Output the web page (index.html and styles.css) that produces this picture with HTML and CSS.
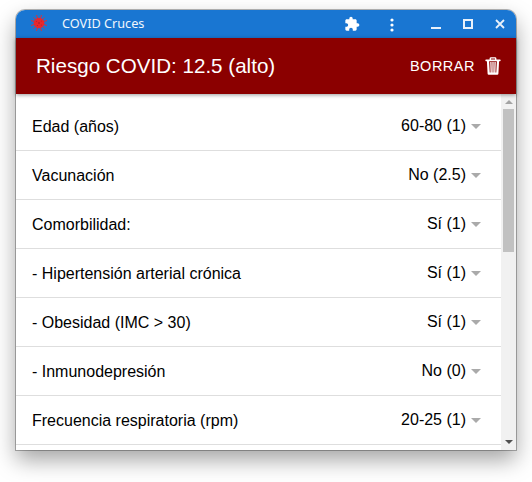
FILE: index.html
```html
<!DOCTYPE html>
<html lang="es">
<head>
<meta charset="utf-8">
<title>COVID Cruces</title>
<link rel="stylesheet" href="styles.css">
</head>
<body>
<main class="window">
  <div class="titlebar">
    <svg class="virus" viewBox="0 0 16 16"><g stroke="#d92f3c" stroke-width="1" fill="none"><path d="M5.500 0l5 16M10.500 0l-5 16M0 5.500l16 5M0 10.500l16-5M2.500 2.500l11 11M13.500 2.500l-11 11"/></g><circle cx="8" cy="8" r="5.300" fill="#e8282c"/><g fill="#b92130"><circle cx="8" cy="8" r="1"/><circle cx="5.500" cy="6.500" r=".6"/><circle cx="10.500" cy="6" r=".6"/><circle cx="6.500" cy="10.500" r=".6"/><circle cx="10.500" cy="10" r=".6"/></g></svg>
    <span class="app-name">COVID Cruces</span>
    <svg class="puzzle" viewBox="0 0 24 24"><path fill="#fff" d="M20.500 11H19V7c0-1.100-.9-2-2-2h-4V3.500C13 2.120 11.880 1 10.500 1S8 2.120 8 3.500V5H4c-1.100 0-1.990.9-1.990 2v3.800H3.500c1.490 0 2.700 1.210 2.700 2.700s-1.210 2.700-2.700 2.700H2V20c0 1.100.9 2 2 2h3.800v-1.500c0-1.490 1.210-2.700 2.700-2.700 1.490 0 2.700 1.210 2.700 2.700V22H17c1.100 0 2-.9 2-2v-4h1.500c1.380 0 2.500-1.120 2.500-2.500S21.880 11 20.500 11z"/></svg>
    <svg class="dots" viewBox="0 0 4 14"><g fill="#fff"><circle cx="2" cy="2" r="1.600"/><circle cx="2" cy="7" r="1.600"/><circle cx="2" cy="12" r="1.600"/></g></svg>
    <svg class="controls" viewBox="0 0 74 10"><g fill="none" stroke="#e8f1fb" stroke-width="2"><path d="M0 9h10M33 1h8v8h-8z"/><path stroke-width="1.800" d="M65 1l8 8M73 1l-8 8"/></g></svg>
  </div>
  <header class="toolbar">
    <h1>Riesgo COVID: 12.5 (alto)</h1>
    <span class="clear">BORRAR</span>
    <svg class="trash" viewBox="0 0 16 18"><g fill="none" stroke="#fff"><path stroke-width="1.400" d="M5.300 3V1.500q0-.6.700-.6h4q.7 0 .7.600V3"/><path stroke-width="1.800" stroke-linecap="round" d="M1.200 3.300h13.600"/><path stroke-width="2.200" stroke-linejoin="round" d="M3 4l.7 12.600h8.600L13 4"/><path stroke-width="1.300" d="M5.900 5l.3 11M8 5v11M10.100 5l-.3 11"/></g></svg>
  </header>
  <div class="body">
    <div class="list">
      <div class="row"><span>Edad (años)</span><span class="value">60-80 (1)</span></div>
      <div class="row"><span>Vacunación</span><span class="value">No (2.5)</span></div>
      <div class="row"><span>Comorbilidad:</span><span class="value">Sí (1)</span></div>
      <div class="row"><span>- Hipertensión arterial crónica</span><span class="value">Sí (1)</span></div>
      <div class="row"><span>- Obesidad (IMC &gt; 30)</span><span class="value">Sí (1)</span></div>
      <div class="row"><span>- Inmunodepresión</span><span class="value">No (0)</span></div>
      <div class="row"><span>Frecuencia respiratoria (rpm)</span><span class="value">20-25 (1)</span></div>
      <div class="row"></div>
    </div>
    <div class="scrollbar"><i class="up"></i><i class="thumb"></i><i class="down"></i></div>
  </div>
</main>
</body>
</html>
```
FILE: styles.css
```css
* { box-sizing: border-box; }
body {
  margin: 0;
  padding: 10px 16px 32px;
  height: 482px;
  overflow: hidden;
  background: #fff;
  font-family: "Liberation Sans", Arial, sans-serif;
}
svg { display: block; flex: none; }
.window {
  display: flex;
  flex-direction: column;
  width: 500px;
  height: 440px;
  border-radius: 9px 9px 0 0;
  background: #fff;
  box-shadow: 0 0 0 1px rgba(0, 0, 0, .28), 0 10px 22px rgba(0, 0, 0, .36);
}
.titlebar {
  display: flex;
  align-items: center;
  height: 28px;
  padding: 0 11px 0 15px;
  border-radius: 9px 9px 0 0;
  background: #1976d2;
}
.virus { width: 16px; height: 16px; margin-top: -2px; }
.app-name {
  margin: -2px auto 0 15px;
  color: #f1f6fc;
  font: 12.7px/18px "Noto Sans", sans-serif;
}
.puzzle { width: 16px; height: 16px; margin-right: 38px; }
.dots { width: 4px; height: 14px; margin: 1px 37px 0 -8px; }
.controls { width: 74px; height: 10px; }
.toolbar {
  position: relative;
  display: flex;
  align-items: center;
  height: 56px;
  padding: 0 15px 0 20px;
  background: #8b0000;
  color: #fff;
  box-shadow: 0 1px 4px rgba(0, 0, 0, .4);
}
h1 {
  margin: 0 auto 0 0;
  font-size: 20.6px;
  font-weight: 400;
  line-height: 24px;
}
.clear { font-size: 14.5px; letter-spacing: .5px; }
.trash { width: 16px; height: 18px; margin-left: 10px; }
.body { display: flex; height: 356px; overflow: hidden; }
.list { flex: 1; padding-top: 8px; }
.row {
  display: flex;
  justify-content: space-between;
  height: 49px;
  padding: 15px 20px 0 16px;
  border-bottom: 1px solid #dedede;
  font-size: 16px;
  line-height: 19px;
  color: #000;
}
.value { margin-top: -1px; }
.value::after {
  content: "";
  display: inline-block;
  margin-left: 5px;
  vertical-align: 2px;
  border: 5px solid transparent;
  border-top-color: #aaa;
  border-bottom: 0;
}
.scrollbar {
  display: flex;
  flex-direction: column;
  align-items: center;
  width: 15px;
  padding: 6px 0;
  background: #f1f1f1;
}
.up, .down { border: 4px solid transparent; }
.up { border-top: 0; border-bottom-color: #a3a3a3; }
.thumb { width: 11px; height: 143px; margin-top: 5px; background: #c1c1c1; }
.down { margin-top: auto; border-bottom: 0; border-top-color: #505050; }
```
